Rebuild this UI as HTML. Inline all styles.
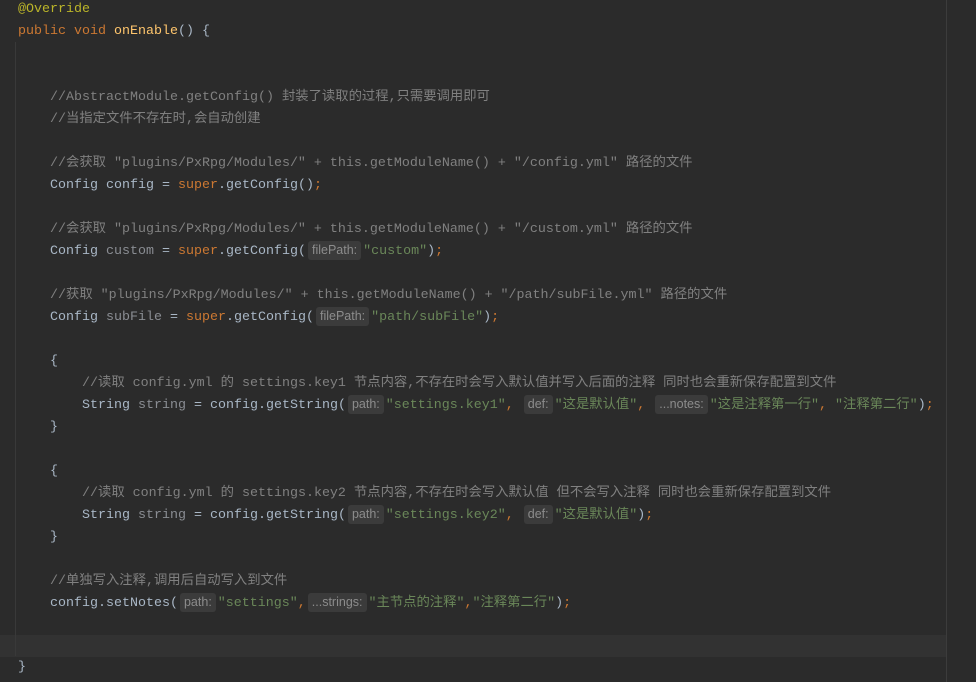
<!DOCTYPE html>
<html><head><meta charset="utf-8"><style>
html,body{margin:0;padding:0}
body{width:976px;height:682px;background:#2b2b2b;position:relative;overflow:hidden;font-family:"Liberation Mono","Noto Sans CJK SC",monospace;font-size:13.33px;color:#a9b7c6}
.l{position:absolute;height:22px;line-height:22px;white-space:pre}
.c{color:#808080}.k{color:#cc7832}.s{color:#6a8759}.m{color:#ffc66d}.a{color:#bbb529}.g{color:#8a8d93}
.h{display:inline-block;font-family:"Liberation Sans",sans-serif;font-size:12.5px;color:#8c8c8c;background:#3b3b3b;border-radius:3px;height:19px;line-height:19px;padding:0 4px;margin:0 2px;vertical-align:0}
</style></head><body>
<div style="position:absolute;left:0;top:635px;width:946px;height:22px;background:#323232"></div>
<div style="position:absolute;left:946px;top:0;width:1px;height:682px;background:#3c3c3c"></div>
<div style="position:absolute;left:15px;top:42px;width:1px;height:614px;background:#393939"></div>
<div class="l a" style="left:18px;top:-1px">@Override</div>
<div class="l" style="left:18px;top:21px"><span class="k">public void </span><span class="m">onEnable</span>() {</div>
<div class="l c" style="left:50px;top:87px">//AbstractModule.getConfig() 封装了读取的过程,只需要调用即可</div>
<div class="l c" style="left:50px;top:109px">//当指定文件不存在时,会自动创建</div>
<div class="l c" style="left:50px;top:153px">//会获取 "plugins/PxRpg/Modules/" + this.getModuleName() + "/config.yml" 路径的文件</div>
<div class="l" style="left:50px;top:175px">Config config = <span class="k">super</span>.getConfig()<span class="k">;</span></div>
<div class="l c" style="left:50px;top:219px">//会获取 "plugins/PxRpg/Modules/" + this.getModuleName() + "/custom.yml" 路径的文件</div>
<div class="l" style="left:50px;top:241px">Config <span class="g">custom</span> = <span class="k">super</span>.getConfig(<span class="h">filePath:</span><span class="s">"custom"</span>)<span class="k">;</span></div>
<div class="l c" style="left:50px;top:285px">//获取 "plugins/PxRpg/Modules/" + this.getModuleName() + "/path/subFile.yml" 路径的文件</div>
<div class="l" style="left:50px;top:307px">Config <span class="g">subFile</span> = <span class="k">super</span>.getConfig(<span class="h">filePath:</span><span class="s">"path/subFile"</span>)<span class="k">;</span></div>
<div class="l" style="left:50px;top:351px">{</div>
<div class="l c" style="left:82px;top:373px">//读取 config.yml 的 settings.key1 节点内容,不存在时会写入默认值并写入后面的注释 同时也会重新保存配置到文件</div>
<div class="l" style="left:82px;top:395px">String <span class="g">string</span> = config.getString(<span class="h">path:</span><span class="s">"settings.key1"</span><span class="k">, </span><span class="h">def:</span><span class="s">"这是默认值"</span><span class="k">, </span><span class="h">...notes:</span><span class="s">"这是注释第一行"</span><span class="k">, </span><span class="s">"注释第二行"</span>)<span class="k">;</span></div>
<div class="l" style="left:50px;top:417px">}</div>
<div class="l" style="left:50px;top:461px">{</div>
<div class="l c" style="left:82px;top:483px">//读取 config.yml 的 settings.key2 节点内容,不存在时会写入默认值 但不会写入注释 同时也会重新保存配置到文件</div>
<div class="l" style="left:82px;top:505px">String <span class="g">string</span> = config.getString(<span class="h">path:</span><span class="s">"settings.key2"</span><span class="k">, </span><span class="h">def:</span><span class="s">"这是默认值"</span>)<span class="k">;</span></div>
<div class="l" style="left:50px;top:527px">}</div>
<div class="l c" style="left:50px;top:571px">//单独写入注释,调用后自动写入到文件</div>
<div class="l" style="left:50px;top:593px">config.setNotes(<span class="h">path:</span><span class="s">"settings"</span><span class="k">,</span><span class="h">...strings:</span><span class="s">"主节点的注释"</span><span class="k">,</span><span class="s">"注释第二行"</span>)<span class="k">;</span></div>
<div class="l" style="left:18px;top:657px">}</div>
</body></html>
